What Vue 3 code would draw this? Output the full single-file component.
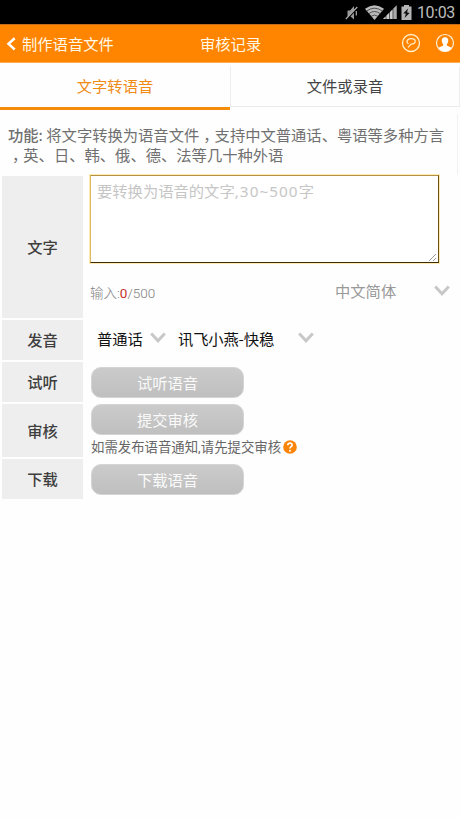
<script setup>
import { ref } from 'vue'

const text = ref('')
const tip = '功能'
</script>

<template>
  <div class="screen">
    <div class="status">
      <svg class="mute" width="14" height="16" viewBox="0 0 14 16">
        <path d="M2.500 5.500H5L9 1v13.500L5 11H2.500z" fill="#999" />
        <path d="M2 14 13 2.500" stroke="#000" stroke-width="1.500" />
        <path d="M.8 14 12.300 2M11.300 6v4.500" fill="none" stroke="#aaa" stroke-width="1.200" />
      </svg>
      <svg class="wifi" width="19" height="15" viewBox="0 0 19 15">
        <path d="M0 3.800Q9.500-3.200 19 3.800L9.500 15z" fill="#bbb" />
        <path d="M1.500 6.200q8-6 16 0M3.700 8.700q5.800-4.400 11.600 0M6 11.300q3.500-2.500 7 0" fill="none" stroke="#333" stroke-width=".8" />
      </svg>
      <svg class="signal" width="14" height="14" viewBox="0 0 14 14">
        <path d="M0 14 14 0v14z" fill="#555" />
        <path d="M0 14l2.500-2.500V14zM3.500 14v-3.500L6 8v6zM7 14V7l2.500-2.500V14z" fill="#ccc" />
        <path d="M10.500 14V3.500L13.500.5V14z" fill="#aaa" />
      </svg>
      <svg class="battery" width="11" height="15" viewBox="0 0 11 15">
        <path d="M3 0h5v1.500h2.500V15H.5V1.500H3z" fill="#b5b5b5" />
        <path d="M7.200 3.500 2.300 8.300l2.600.5L3.500 13l5.100-5L6 7.300z" fill="#111" />
      </svg>
      <span class="time">10:03</span>
    </div>

    <header class="bar">
      <svg class="back" width="10" height="14" viewBox="0 0 10 14">
        <path d="M8.700 1.200 2.500 6.800l6.200 5.700" fill="none" stroke="#fff" stroke-width="2.500" />
      </svg>
      <span class="back-text">制作语音文件</span>
      <span class="title">审核记录</span>
      <svg class="chat" width="20" height="20" viewBox="0 0 20 20" fill="none" stroke="#fff0c9">
        <circle cx="10" cy="10" r="8.500" stroke-width="1.300" />
        <path d="M7.500 10.700C5 9.500 5.500 5.800 10 5.600c5.500-.2 5.800 5.400.2 5.500L7 14.300" stroke-width="1.200" />
      </svg>
      <svg class="user" width="20" height="20" viewBox="0 0 20 20">
        <circle cx="10" cy="10" r="8.500" fill="none" stroke="#fff0d5" stroke-width="1.200" />
        <path d="M10 4.300c-2.600 0-3.500 1.800-3.200 4 .2 1.500.8 2.300 1.400 3v1.200l-4.800 2.200C5 17.500 7.500 18.500 10 18.500s5-1 6.600-3.800l-4.800-2.200v-1.200c.6-.7 1.200-1.500 1.400-3 .3-2.200-.6-4-3.200-4z" fill="#fff" />
      </svg>
    </header>

    <nav class="tabs">
      <div class="tab active">文字转语音</div>
      <div class="tab">文件或录音</div>
    </nav>

    <p class="intro"><b>{{ tip }}</b>: 将文字转换为语音文件<i>，</i>支持中文普通话、粤语等多种方言<br><i>，</i>英、日、韩、俄、德、法等几十种外语</p>

    <main class="form">
      <div class="row words">
        <div class="label">文字</div>
        <div class="field">
          <div class="box">
            <textarea v-model="text"></textarea>
            <span v-if="!text" class="hint">要转换为语音的文字<span class="limit">,30~500</span>字</span>
            <svg class="grip" width="9" height="9" viewBox="0 0 9 9"><path d="M1 8 8 1M5 8l3-3" /></svg>
          </div>
          <div class="meta">
            <span class="count">输入:<em>{{ text.length }}</em>/500</span>
            <span class="lang">中文简体</span>
            <svg class="arrow" width="16" height="12" viewBox="0 0 16 12"><path d="M1.200 1.500 8 8.700l6.800-7.200" /></svg>
          </div>
        </div>
      </div>

      <div class="row voice">
        <div class="label">发音</div>
        <div class="field voices">
          <span class="dialect">普通话</span>
          <svg class="arrow" width="16" height="12" viewBox="0 0 16 12"><path d="M1.200 1.500 8 8.700l6.800-7.200" /></svg>
          <span class="speaker">讯飞小燕-快稳</span>
          <svg class="arrow" width="16" height="12" viewBox="0 0 16 12"><path d="M1.200 1.500 8 8.700l6.800-7.200" /></svg>
        </div>
      </div>

      <div class="row listen">
        <div class="label">试听</div>
        <div class="field"><button>试听语音</button></div>
      </div>

      <div class="row review">
        <div class="label">审核</div>
        <div class="field">
          <button>提交审核</button>
          <div class="note">
            <span>如需发布语音通知,请先提交审核</span>
            <svg width="14" height="14" viewBox="0 0 14 14">
              <circle cx="7" cy="7" r="6.800" fill="#f88508" />
              <path d="M4.800 5.200C4.900 2.300 9.400 2.500 9.200 5.100 9.100 6.600 7 6.800 7 8.500" fill="none" stroke="#fff" stroke-width="1.600" />
              <circle cx="7" cy="10.700" r="1" fill="#fff" />
            </svg>
          </div>
        </div>
      </div>

      <div class="row download">
        <div class="label">下载</div>
        <div class="field"><button>下载语音</button></div>
      </div>
    </main>
  </div>
</template>

<style>
body {
  margin: 0;
  background: #fff;
}
</style>

<style scoped>
.screen {
  width: 460px;
  height: 819px;
  overflow: hidden;
  background: #fefefe;
  font-family: "Noto Sans CJK SC", sans-serif;
  font-size: 15.3px;
  color: #444;
}
svg {
  display: block;
  flex: none;
}
span {
  white-space: nowrap;
}
.status {
  display: flex;
  height: 24px;
  background: #000;
}
.mute {
  margin: 5px 0 0 345px;
}
.wifi {
  margin: 5px 0 0 6px;
}
.signal {
  margin: 5px 0 0 -1px;
}
.battery {
  margin: 5px 0 0 4px;
}
.time {
  margin-left: 5px;
  font: 16px/26px Roboto, sans-serif;
  letter-spacing: -0.4px;
  color: #bdbdbd;
}
.bar {
  display: flex;
  align-items: center;
  height: 39px;
  box-sizing: border-box;
  background: #ff8400;
  border-top: 1px solid #c56a16;
  border-bottom: 1px solid #ffad50;
  color: #fff8e6;
}
.back {
  margin-left: 6px;
}
.back-text {
  width: 92px;
  margin-left: 6px;
  padding-bottom: 2px;
}
.title {
  width: 61px;
  margin-left: 86px;
  padding-bottom: 2px;
}
.chat {
  margin: 0 0 2px 140px;
}
.user {
  margin: 0 0 1px 14px;
}
.tabs {
  display: flex;
  height: 47px;
  box-sizing: border-box;
  padding-top: 3px;
}
.tab {
  width: 230px;
  height: 41px;
  box-sizing: border-box;
  border-right: 1px solid #eee;
  border-bottom: 1px solid #eaeaea;
  text-align: center;
  line-height: 38px;
}
.tab.active {
  height: 44px;
  border-right-width: 0;
  border-bottom: 3px solid #f68c0c;
  color: #f08b16;
}
.tab.active + .tab {
  border-left: 1px solid #eee;
}
.intro {
  width: 458px;
  height: 61px;
  box-sizing: border-box;
  margin: 4px 0 0;
  padding: 11px 0 0 8px;
  border-right: 1px solid #f1f1f1;
  line-height: 19.500px;
  color: #707070;
  white-space: nowrap;
}
.intro b {
  font-weight: 500;
}
.intro i {
  display: inline-block;
  font-style: normal;
  transform: translateX(4px);
}
.form {
  display: flex;
  flex-direction: column;
  gap: 2px;
  margin-top: 1px;
  padding-left: 2px;
}
.row {
  display: flex;
  height: 40px;
}
.words {
  height: 142px;
}
.review {
  height: 53px;
}
.label {
  display: flex;
  align-items: center;
  justify-content: center;
  width: 81px;
  flex: none;
  box-sizing: border-box;
  padding-bottom: 2px;
  background: #eee;
  font-weight: 500;
  color: #3e3e3e;
}
.field {
  flex: 1;
  padding-left: 8px;
}
.words .field {
  padding-left: 7px;
}
.box {
  position: relative;
  width: 349px;
  height: 88px;
  margin-top: -1px;
}
textarea {
  display: block;
  width: 100%;
  height: 100%;
  box-sizing: border-box;
  margin: 0;
  padding: 5px 6px;
  border: 1px solid;
  border-color: #b39245 #6b4e17 #3b2b0b #e0b964;
  outline: 1px solid #ffeab0;
  outline-offset: 0;
  background: #fff;
  font: 15.3px/20px "Noto Sans CJK SC", sans-serif;
  color: #444;
  resize: none;
}
.hint {
  position: absolute;
  left: 7px;
  top: 5px;
  line-height: 20px;
  color: #c6c6c6;
  pointer-events: none;
}
.limit {
  font-family: "Noto Sans", sans-serif;
  letter-spacing: 1.05px;
}
.grip {
  position: absolute;
  right: 2px;
  bottom: 1px;
  fill: none;
  stroke: #999;
}
.meta {
  display: flex;
  align-items: center;
  height: 28px;
  margin-top: 13px;
}
.count {
  width: 245px;
  padding-top: 4px;
  font-family: Roboto, "Noto Sans CJK SC", sans-serif;
  font-size: 13.500px;
  font-weight: 300;
  color: #808080;
}
.count em {
  font-style: normal;
  font-weight: 400;
  color: #c8322d;
}
.lang {
  width: 99px;
  color: #999;
}
.arrow {
  fill: none;
  stroke: #c8c8c8;
  stroke-width: 3;
}
.meta .arrow {
  margin-top: 2px;
}
.voices {
  display: flex;
  align-items: center;
  padding: 0 0 5px 14px;
  color: #111;
}
.voices .arrow {
  margin-top: 1px;
}
.dialect {
  width: 53px;
}
.speaker {
  width: 119px;
  margin-left: 12px;
  letter-spacing: -0.15px;
}
.speaker + .arrow {
  margin-left: 1px;
}
button {
  display: block;
  width: 153px;
  height: 31px;
  margin: 5px 0 0;
  padding: 0 0 2px;
  border: 1px solid #d4d4d4;
  border-radius: 10px;
  background: linear-gradient(#cbcbcb, #bfbfbf);
  font: 15.3px/20px "Noto Sans CJK SC", sans-serif;
  color: #fafafa;
}
.review button {
  margin-top: 0;
}
.note {
  display: flex;
  gap: 2px;
  margin-top: 3px;
  font-family: Roboto, "Noto Sans CJK SC", sans-serif;
  font-size: 13.400px;
  line-height: 20px;
  color: #666;
}
.note svg {
  margin-top: 2px;
}
</style>
